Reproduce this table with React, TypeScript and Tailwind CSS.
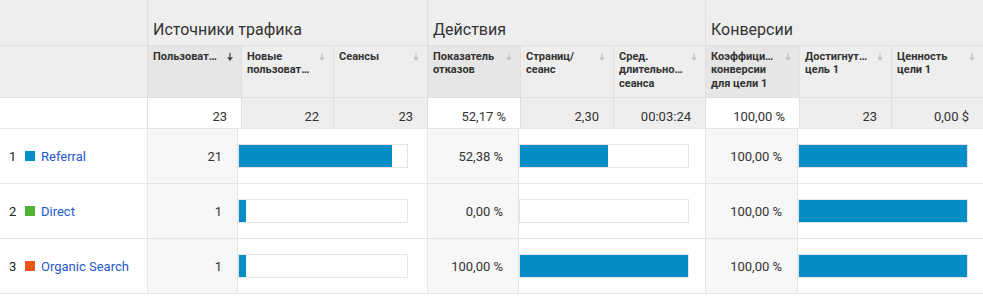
import React from "react";

type Col = { label: string[]; dark?: boolean; active?: boolean; total: string };

const headerCols: Col[] = [
  { label: ["Пользоват…"], dark: true, active: true, total: "23" },
  { label: ["Новые", "пользоват…"], total: "22" },
  { label: ["Сеансы"], total: "23" },
  { label: ["Показатель", "отказов"], dark: true, total: "52,17 %" },
  { label: ["Страниц/", "сеанс"], total: "2,30" },
  { label: ["Сред.", "длительно…", "сеанса"], total: "00:03:24" },
  { label: ["Коэффици…", "конверсии", "для цели 1"], dark: true, total: "100,00 %" },
  { label: ["Достигнут…", "цель 1"], total: "23" },
  { label: ["Ценность", "цели 1"], total: "0,00 $" },
];

const rows = [
  { n: 1, name: "Referral", color: "bg-[#058dc7]", users: "21", uPct: (21 / 23) * 100, bounce: "52,38 %", bPct: 52.38, conv: "100,00 %", cPct: 100 },
  { n: 2, name: "Direct", color: "bg-[#50b432]", users: "1", uPct: (1 / 23) * 100, bounce: "0,00 %", bPct: 0, conv: "100,00 %", cPct: 100 },
  { n: 3, name: "Organic Search", color: "bg-[#ed561b]", users: "1", uPct: (1 / 23) * 100, bounce: "100,00 %", bPct: 100, conv: "100,00 %", cPct: 100 },
];

function SortArrow({ active }: { active?: boolean }) {
  return (
    <svg width="6" height="8" viewBox="0 0 6 8" className="mt-[3px] shrink-0">
      <path d="M2.4 0h1.2v4.6H2.4z" fill={active ? "#444" : "#c4c4c4"} />
      <path d="M0 4.2h6L3 8z" fill={active ? "#444" : "#c4c4c4"} />
    </svg>
  );
}

function Bar({ pct }: { pct: number }) {
  return (
    <div className="w-[170px] h-[24px] border border-[#e5e5e5] bg-white">
      <div className="h-full bg-[#058dc7]" style={{ width: `${pct}%` }} />
    </div>
  );
}

function ValueCell({ v }: { v: string }) {
  return (
    <div className="flex items-center justify-end border-l border-[#e5e5e5] bg-[#f7f7f7] pr-[15px] text-[13px] leading-[15px] text-[#333]">
      {v}
    </div>
  );
}

function BarCell({ pct }: { pct: number }) {
  return (
    <div className="flex items-center border-l border-[#e5e5e5] bg-white">
      <Bar pct={pct} />
    </div>
  );
}

export default function App() {
  return (
    <div className="w-[983px] h-[299px] bg-white font-[family-name:Roboto,Arial,sans-serif] overflow-hidden">
      {/* group headers */}
      <div className="grid grid-cols-[147px_280px_278px_278px] h-[46px] border-b border-[#e0e0e0] bg-[#eeeeee]">
        <div />
        {["Источники трафика", "Действия", "Конверсии"].map((t) => (
          <div key={t} className="border-l border-[#e0e0e0] pl-[5px] pt-[20px] text-[16px] leading-[19px] text-[#333]">
            {t}
          </div>
        ))}
      </div>
      {/* column headers */}
      <div className="grid grid-cols-[147px_94px_92px_94px_93px_93px_92px_94px_92px_92px] h-[52px] border-b border-[#e0e0e0] bg-[#eeeeee]">
        <div />
        {headerCols.map((c, i) => (
          <div
            key={i}
            className={`flex justify-between border-l border-[#e0e0e0] pl-[5px] pr-[8px] pt-[4px] ${c.dark ? "bg-[#e6e6e6]" : "bg-[#eeeeee]"}`}
          >
            <div className="text-[11px] font-bold leading-[13.3px] text-[#333] whitespace-nowrap">
              {c.label.map((l) => (
                <div key={l}>{l}</div>
              ))}
            </div>
            <SortArrow active={c.active} />
          </div>
        ))}
      </div>
      {/* totals */}
      <div className="grid grid-cols-[147px_94px_92px_94px_93px_93px_92px_94px_92px_92px] h-[31px] border-b border-[#e5e5e5]">
        <div className="bg-white" />
        {headerCols.map((c, i) => (
          <div
            key={i}
            className={`flex items-end justify-end border-l border-[#e0e0e0] pr-[14px] pb-[4px] text-[13px] leading-[15px] text-[#333] ${c.dark ? "bg-white" : "bg-[#eeeeee]"}`}
          >
            {c.total}
          </div>
        ))}
      </div>
      {/* data rows */}
      {rows.map((r) => (
        <div
          key={r.n}
          className="grid grid-cols-[147px_90px_190px_91px_187px_92px_186px] h-[55px] border-b border-[#e5e5e5]"
        >
          <div className="flex items-center pl-[9px] text-[13px] leading-[15px]">
            <span className="text-[#222] w-[16px]">{r.n}</span>
            <span className={`w-[10px] h-[10px] ${r.color}`} />
            <span className="ml-[6px] text-[#2358cf]">{r.name}</span>
          </div>
          <ValueCell v={r.users} />
          <BarCell pct={r.uPct} />
          <ValueCell v={r.bounce} />
          <BarCell pct={r.bPct} />
          <ValueCell v={r.conv} />
          <BarCell pct={r.cPct} />
        </div>
      ))}
    </div>
  );
}
